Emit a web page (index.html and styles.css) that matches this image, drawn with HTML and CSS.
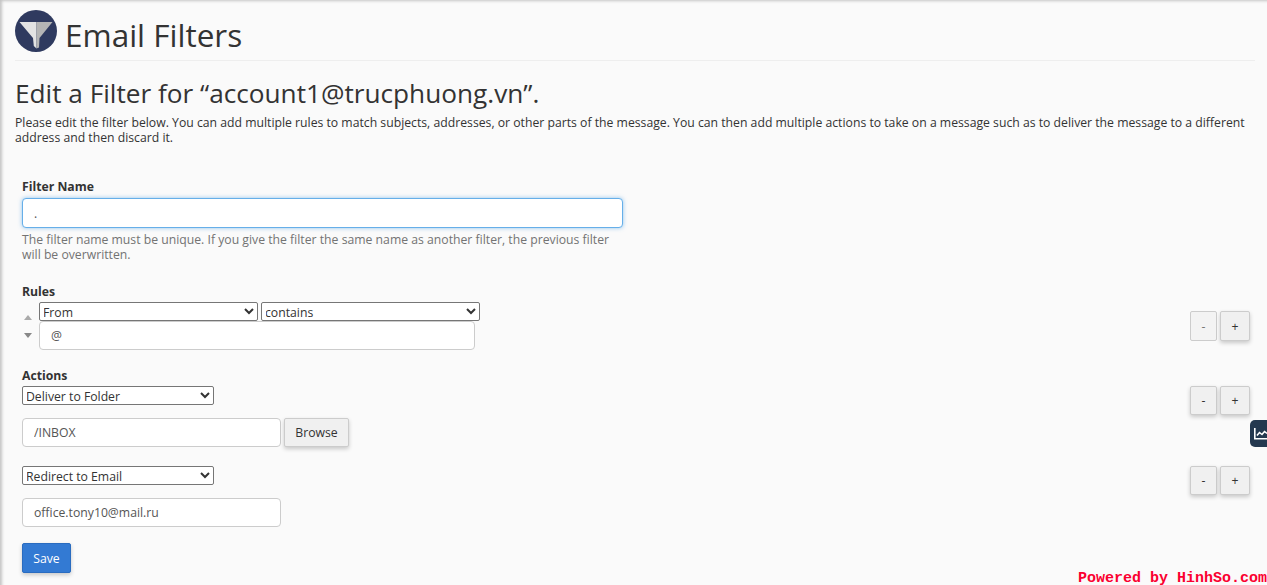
FILE: index.html
```html
<!DOCTYPE html>
<html lang="en">
<head>
<meta charset="utf-8">
<title>Email Filters</title>
<link rel="stylesheet" href="styles.css">
</head>
<body>
<main class="page">
  <header class="page-header">
    <svg class="logo" viewBox="0 0 42 42" width="42" height="42" aria-hidden="true">
      <circle cx="21" cy="21" r="21" fill="#2f3a5f"/>
      <path d="M4.500 12H21.500V38.500L18.800 36L18 28Z" fill="#e3e3e3"/>
      <path d="M21.500 12H37.500L24.500 28L24 37.500L21.500 38.500Z" fill="#b5b5b5"/>
    </svg>
    <h1 class="page-title">Email Filters</h1>
  </header>
  <h2 class="subtitle">Edit a Filter for “account1@trucphuong.vn”.</h2>
  <p class="intro">Please edit the filter below. You can add multiple rules to match subjects, addresses, or other parts of the message. You can then add multiple actions to take on a message such as to deliver the message to a different address and then discard it.</p>

  <form class="filter-form">
    <section class="name-group">
      <label class="field-label" for="filter-name">Filter Name</label>
      <input class="text-input focused" id="filter-name" type="text" value=".">
      <p class="help">The filter name must be unique. If you give the filter the same name as another filter, the previous filter will be overwritten.</p>
    </section>

    <section class="rules-group">
      <div class="field-label">Rules</div>
      <div class="row rule-row">
        <div class="rule-body">
          <div class="arrows">
            <span class="arrow-up"></span>
            <span class="arrow-down"></span>
          </div>
          <div class="rule-fields">
            <div class="select-pair">
              <select class="select select-rule"><option>From</option></select>
              <select class="select select-rule"><option>contains</option></select>
            </div>
            <input class="text-input rule-input" type="text" value="@">
          </div>
        </div>
        <div class="pm pm-rule">
          <button class="btn btn-disabled" type="button">-</button>
          <button class="btn" type="button">+</button>
        </div>
      </div>
    </section>

    <section class="actions-group">
      <div class="field-label">Actions</div>
      <div class="row action-row">
        <div class="action-body">
          <select class="select select-action"><option>Deliver to Folder</option></select>
          <div class="dest">
            <input class="text-input dest-input" type="text" value="/INBOX">
            <button class="btn browse" type="button">Browse</button>
          </div>
        </div>
        <div class="pm">
          <button class="btn" type="button">-</button>
          <button class="btn" type="button">+</button>
        </div>
      </div>
      <div class="row action-row second">
        <div class="action-body">
          <select class="select select-action"><option>Redirect to Email</option></select>
          <div class="dest">
            <input class="text-input dest-input" type="text" value="office.tony10@mail.ru">
          </div>
        </div>
        <div class="pm">
          <button class="btn" type="button">-</button>
          <button class="btn" type="button">+</button>
        </div>
      </div>
    </section>
    <button class="save" type="button">Save</button>
  </form>
</main>

<div class="side-tab">
  <svg viewBox="0 0 13 12" width="13" height="12" aria-hidden="true">
    <path d="M.800 0V10.800H13" fill="none" stroke="#fff" stroke-width="1.600"/>
    <path d="M3 7.500L5.500 4.500L8 6.500L10.500 3.500L13 5.500" fill="none" stroke="#fff" stroke-width="1.600"/>
  </svg>
</div>
<div class="watermark">Powered by HinhSo.com</div>
</body>
</html>
```
FILE: styles.css
```css
* { box-sizing: border-box; }
html, body { height: 100%; }
body {
  margin: 0;
  background: #fafafa;
  color: #333;
  font-family: "Open Sans", sans-serif;
  font-size: 12.22px;
  line-height: 15px;
  overflow: hidden;
  box-shadow: inset 3px 2px 3px -1px #c4c4c4;
}
.page { padding: 10px 12px 0 15px; }
.page-header {
  display: flex;
  align-items: flex-start;
  gap: 8px;
  height: 51px;
  border-bottom: 1px solid #eee;
}
.logo { flex: none; }
.page-title {
  margin: 6px 0 0;
  font-size: 31.5px;
  line-height: 38px;
  font-weight: 400;
}
.subtitle {
  margin: 16px 0 0;
  font-size: 26.2px;
  line-height: 32px;
  font-weight: 400;
}
.intro { margin: 6px 0 0; }
.filter-form { padding: 34px 5px 0 7px; }
.field-label {
  display: block;
  font-weight: 700;
  line-height: 15px;
}
.text-input {
  display: block;
  height: 29px;
  padding: 0 11px;
  background: #fff;
  border: 1px solid #ccc;
  border-radius: 4px;
  color: #555;
  font: 12.22px/15px "Open Sans", sans-serif;
  outline: 0;
}
.focused {
  width: 601px;
  height: 30px;
  margin-top: 4px;
  border-color: #66afe9;
  box-shadow: 0 0 4px rgba(102, 175, 233, .7);
}
.help {
  width: 601px;
  margin: 4px 0 0;
  color: #737373;
}
.rules-group { margin-top: 22px; }
.row {
  display: flex;
  justify-content: space-between;
}
.rule-row { margin-top: 3px; }
.rule-body { display: flex; }
.arrows {
  display: flex;
  flex-direction: column;
  gap: 13px;
  width: 17px;
  padding: 13px 0 0 2px;
}
.arrow-up, .arrow-down {
  width: 0;
  height: 0;
  border-left: 4px solid transparent;
  border-right: 4px solid transparent;
}
.arrow-up { border-bottom: 5px solid #aaa; }
.arrow-down { border-top: 5px solid #888; }
.select-pair { display: flex; gap: 3px; }
.select {
  display: block;
  height: 19px;
  padding: 0;
  background: #fff;
  border: 1px solid #767676;
  border-radius: 2px;
  color: #333;
  font: 12.22px "Open Sans", sans-serif;
  text-indent: -1px;
}
.select-rule { width: 219px; }
.rule-input { width: 436px; }
.pm { display: flex; gap: 3px; height: fit-content; }
.pm-rule { padding-top: 9px; }
.pm .btn { width: 30px; height: 29px; padding: 0; }
.pm .btn:first-child { width: 27px; }
.pm-rule .btn { height: 30px; }
.btn {
  background: #f0f0f0;
  border: 1px solid #ccc;
  border-radius: 2px;
  color: #333;
  font: 12.22px/15px "Open Sans", sans-serif;
  box-shadow: 0 2px 4px rgba(0, 0, 0, .2);
}
.pm .btn-disabled {
  background: #f3f3f3;
  color: #777;
  box-shadow: none;
}
.actions-group { margin-top: 18px; }
.action-row { margin-top: 3px; }
.select-action { width: 192px; }
.dest { display: flex; gap: 3px; margin-top: 13px; }
.dest-input { width: 259px; }
.browse { width: 65px; height: 29px; padding: 0; }
.second { margin-top: 19px; }
.save {
  display: block;
  width: 49px;
  height: 30px;
  margin-top: 16px;
  padding: 0;
  background: #337ad3;
  border: 1px solid #2a6cc0;
  border-radius: 2px;
  color: #fff;
  font: 12.22px/15px "Open Sans", sans-serif;
  box-shadow: 0 2px 4px rgba(0, 0, 0, .2);
}
.side-tab {
  position: absolute;
  top: 420px;
  left: 1250px;
  width: 17px;
  height: 27px;
  padding: 8px 0 0 4px;
  background: #24384f;
  border-radius: 5px 0 0 5px;
  overflow: hidden;
}
.side-tab svg { display: block; }
.watermark {
  position: absolute;
  right: 0;
  bottom: 1px;
  color: #fa0030;
  font: 700 15px/11px "Liberation Mono", monospace;
  white-space: nowrap;
}
```
